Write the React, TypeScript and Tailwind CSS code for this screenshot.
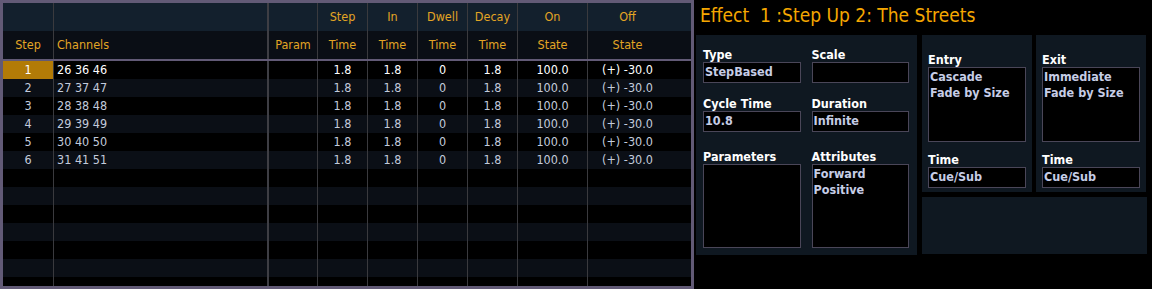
import React from 'react'

const cols = [
  { key: 'step', w: 'w-[51px]', border: 'border-r border-[#3a3a3e]', h1: '', h2: 'Step', align: 'text-center' },
  { key: 'chan', w: 'w-[215px]', border: 'border-r-2 border-[#3e3e44]', h1: '', h2: 'Channels', align: 'text-left pl-[3px]' },
  { key: 'param', w: 'w-[49px]', border: 'border-r border-[#3a3a3e]', h1: '', h2: 'Param', align: 'text-center' },
  { key: 'stime', w: 'w-[50px]', border: 'border-r border-[#3a3a3e]', h1: 'Step', h2: 'Time', align: 'text-center' },
  { key: 'in', w: 'w-[50px]', border: 'border-r border-[#3a3a3e]', h1: 'In', h2: 'Time', align: 'text-center' },
  { key: 'dwell', w: 'w-[50px]', border: 'border-r border-[#3a3a3e]', h1: 'Dwell', h2: 'Time', align: 'text-center' },
  { key: 'decay', w: 'w-[50px]', border: 'border-r border-[#3a3a3e]', h1: 'Decay', h2: 'Time', align: 'text-center' },
  { key: 'on', w: 'w-[70px]', border: 'border-r border-[#3a3a3e]', h1: 'On', h2: 'State', align: 'text-center' },
  { key: 'off', w: 'w-[103px]', border: '', h1: 'Off', h2: 'State', align: 'text-center pr-[24px]' },
]

const steps = [
  ['1', '26 36 46'],
  ['2', '27 37 47'],
  ['3', '28 38 48'],
  ['4', '29 39 49'],
  ['5', '30 40 50'],
  ['6', '31 41 51'],
]

const condensed = { fontFamily: '"DejaVu Sans Condensed", "DejaVu Sans", sans-serif' }

const StepTable = () => {
  const rows = Array.from({ length: 13 }, (_, i) => steps[i] ?? null)

  return (
    <div className="w-[694px] h-[289px] shrink-0 border-[3px] border-[#625a76] bg-black flex flex-col overflow-hidden text-[12.5px]" style={condensed}>
      <div className="flex h-[28px] bg-[#13202d] text-[#e3a524]">
        {cols.map((c) => (
          <div key={c.key} className={`${c.w} ${c.border} ${c.align} shrink-0 leading-[28px]`}>
            {c.h1}
          </div>
        ))}
      </div>
      <div className="flex h-[28px] bg-[#0a0e15] text-[#e3a524] border-b-2 border-[#625a76] box-content">
        {cols.map((c) => (
          <div key={c.key} className={`${c.w} ${c.border} ${c.align} shrink-0 leading-[28px]`}>
            {c.h2}
          </div>
        ))}
      </div>
      {rows.map((r, i) => {
        const first = i === 0
        const text = first ? 'text-white' : 'text-[#c3cbdc]'
        const bg = i % 2 === 0 ? 'bg-black' : 'bg-[#0b0f16]'
        const vals = r ? [r[0], r[1], '', '1.8', '1.8', '0', '1.8', '100.0', '(+) -30.0'] : Array(9).fill('')
        return (
          <div key={i} className={`flex h-[18px] shrink-0 ${bg} ${text}`}>
            {cols.map((c, j) => (
              <div
                key={c.key}
                className={`${c.w} ${c.border} ${c.align} shrink-0 leading-[18px] whitespace-pre ${first && j === 0 ? 'bg-[#b27b07]' : ''}`}
              >
                {vals[j]}
              </div>
            ))}
          </div>
        )
      })}
    </div>
  )
}

const Box = ({ lines, h = 'h-[21px]' }: { lines: string[]; h?: string }) => (
  <div className={`${h} border border-[#4a4658] bg-black px-[1px] text-[#c6cde6] leading-[16px] pt-[1px]`}>
    {lines.map((l) => (
      <div key={l}>{l}</div>
    ))}
  </div>
)

const Field = ({ label, lines, h, mt }: { label: string; lines: string[]; h?: string; mt: string }) => (
  <div className={mt}>
    <div className="h-[15px] leading-[15px] text-white">{label}</div>
    <Box lines={lines} h={h} />
  </div>
)

const EffectPanel = () => (
  <div className="flex-1 bg-black pl-[2px] pt-[4px]" style={condensed}>
    <div className="pl-[4px] h-[31px] text-[19px] leading-[22px] text-[#f5a700] whitespace-pre">Effect  1 :Step Up 2: The Streets</div>
    <div className="flex gap-[5px] text-[12.5px] font-bold">
      <div className="w-[221px] h-[220px] bg-[#0f1821] pl-[7px] pr-[8px] pt-[12px] grid grid-cols-2 gap-x-[11px] content-start">
        <Field label="Type" lines={['StepBased']} mt="" />
        <Field label="Scale" lines={[]} mt="" />
        <Field label="Cycle Time" lines={['10.8']} mt="mt-[13px]" />
        <Field label="Duration" lines={['Infinite']} mt="mt-[13px]" />
        <Field label="Parameters" lines={[]} h="h-[84px]" mt="mt-[17px]" />
        <Field label="Attributes" lines={['Forward', 'Positive']} h="h-[84px]" mt="mt-[17px]" />
      </div>
      <div className="w-[225px] flex flex-col gap-[5px]">
        <div className="flex gap-[4px]">
          {[
            ['Entry', ['Cascade', 'Fade by Size']],
            ['Exit', ['Immediate', 'Fade by Size']],
          ].map(([label, lines]) => (
            <div key={label as string} className="w-[110px] h-[157px] bg-[#0f1821] pl-[6px] pr-[6px] pt-[17px]">
              <Field label={label as string} lines={lines as string[]} h="h-[75px]" mt="" />
              <Field label="Time" lines={['Cue/Sub']} mt="mt-[10px]" />
            </div>
          ))}
        </div>
        <div className="h-[57px] bg-[#0f1821]" />
      </div>
    </div>
  </div>
)

export default function App() {
  return (
    <div className="w-[1152px] h-[289px] flex bg-black overflow-hidden">
      <StepTable />
      <EffectPanel />
    </div>
  )
}
